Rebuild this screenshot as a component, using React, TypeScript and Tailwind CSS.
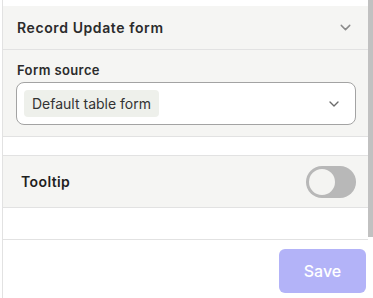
import { ChevronDown } from "lucide-react";

export default function App() {
    return (
        <div
            className="w-[373px] h-[298px] bg-white overflow-hidden"
            style={{ fontFamily: "Inter, 'Noto Sans', sans-serif" }}
        >
            <div className="ml-[2px] h-full border-l border-[#e2e2e2] flex flex-col">
                <div className="flex h-[240px]">
                    <div className="flex-1 border-b border-[#e2e2e2] flex flex-col">
                        <div className="h-[6px] bg-white" />

                        {/* section header */}
                        <div className="h-[44px] bg-[#f5f5f3] border-b border-[#e2e2e2] flex items-center justify-between pl-[14px] pr-[14px]">
                            <span className="text-[14px] font-semibold text-[#2b2b2b] tracking-[0.6px]">Record Update form</span>
                            <ChevronDown className="w-[17px] h-[17px] text-[#8a8a8a]" strokeWidth={2} />
                        </div>

                        <div className="bg-[#f5f5f3] border-b border-[#e2e2e2] pl-[13px] pr-[12px] pt-[11px] pb-[11px]">
                            <div className="pl-[1px] text-[13px] font-semibold text-[#2b2b2b] leading-[18px] mb-[3px] tracking-[0.4px]">Form source</div>
                            <div className="h-[43px] bg-white border border-[#a3a3a3] rounded-[8px] flex items-center justify-between pl-[7px] pr-[13px]">
                                <span className="h-[27px] bg-[#eef0eb] rounded-[4px] px-[8px] flex items-center text-[14px] text-[#333]">Default table form</span>
                                <ChevronDown className="w-[16px] h-[16px] text-[#6b6b6b]" strokeWidth={2} />
                            </div>
                        </div>

                        <div className="h-[19px] bg-white border-b border-[#e2e2e2]" />

                        <div className="h-[52px] bg-[#f5f5f3] border-b border-[#e2e2e2] flex items-center justify-between pl-[18px] pr-[12px]">
                            <span className="text-[14px] font-semibold text-[#1f1f1f] tracking-[0.4px]">Tooltip</span>
                            <div className="w-[50px] h-[32px] rounded-full bg-[#b8b8b8] p-[2px] flex items-center">
                                <div className="w-[30px] h-[30px] -ml-[1px] rounded-full bg-[#f4f4f2] border-2 border-[#b8b8b8]" />
                            </div>
                        </div>

                        <div className="flex-1 bg-white" />
                    </div>
                    <div className="w-[5px] h-[237px] bg-[#c1c1c1]" />
                </div>

                <div className="flex-1 flex justify-end items-start pt-[9px] pr-[7px]">
                    <button className="w-[87px] h-[44px] rounded-[6px] bg-[#b3b3f8] text-white text-[16px] font-medium">Save</button>
                </div>
            </div>
        </div>
    );
}
